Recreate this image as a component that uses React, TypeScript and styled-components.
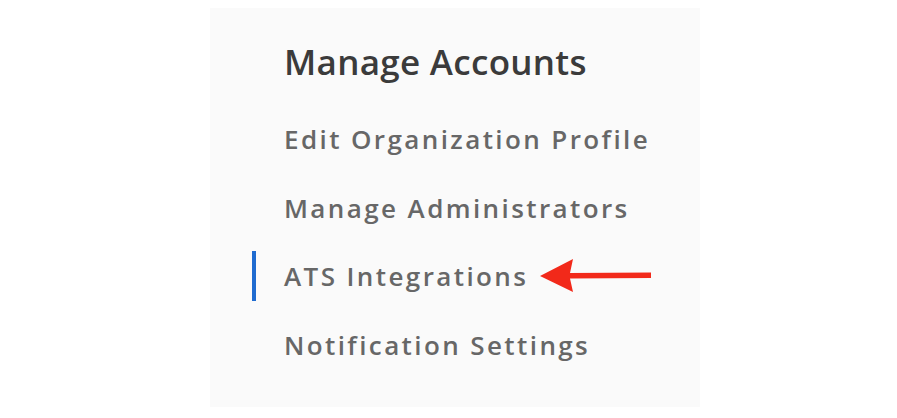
import React from "react";
import styled, { createGlobalStyle } from "styled-components";

const Global = createGlobalStyle`
  html, body { margin: 0; padding: 0; background: #ffffff; }
  body { font-family: "Open Sans", "Noto Sans", sans-serif; }
`;

const Page = styled.div`
  width: 897px;
  height: 418px;
  padding: 8px 0 0 210px;
  box-sizing: border-box;
`;

const Panel = styled.nav`
  width: 490px;
  height: 399px;
  background: #fafafa;
  box-sizing: border-box;
  padding: 30px 0 0 42px;
  display: flex;
  flex-direction: column;
`;

const Title = styled.h2`
  margin: 0 0 0 32px;
  font-size: 35px;
  line-height: 48px;
  font-weight: 600;
  color: #3b3b3b;
  letter-spacing: 0.3px;
`;

const List = styled.ul`
  list-style: none;
  margin: 28px 0 0 0;
  padding: 0;
  display: flex;
  flex-direction: column;
  gap: 18.5px;
`;

const Item = styled.li<{ $active?: boolean }>`
  display: flex;
  align-items: center;
  height: 50px;
  padding-left: 28px;
  border-left: 4px solid ${(p) => (p.$active ? "#1f6bd0" : "transparent")};
  font-size: 26px;
  font-weight: 600;
  letter-spacing: 2.4px;
  color: #676767;
`;

const Arrow = styled.svg`
  margin-left: 12px;
  flex: none;
`;

export default function App() {
  const items = [
    "Edit Organization Profile",
    "Manage Administrators",
    "ATS Integrations",
    "Notification Settings",
  ];
  return (
    <>
      <Global />
      <Page>
        <Panel>
          <Title>Manage Accounts</Title>
          <List>
            {items.map((t) => (
              <Item key={t} $active={t === "ATS Integrations"}>
                {t}
                {t === "ATS Integrations" && (
                  <Arrow width="114" height="36" viewBox="0 0 114 36">
                    <path d="M0 18 L33 1 L30 15 L111 14.5 L111 20 L30 20.5 L33 34 Z" fill="#f2291a" />
                  </Arrow>
                )}
              </Item>
            ))}
          </List>
        </Panel>
      </Page>
    </>
  );
}
